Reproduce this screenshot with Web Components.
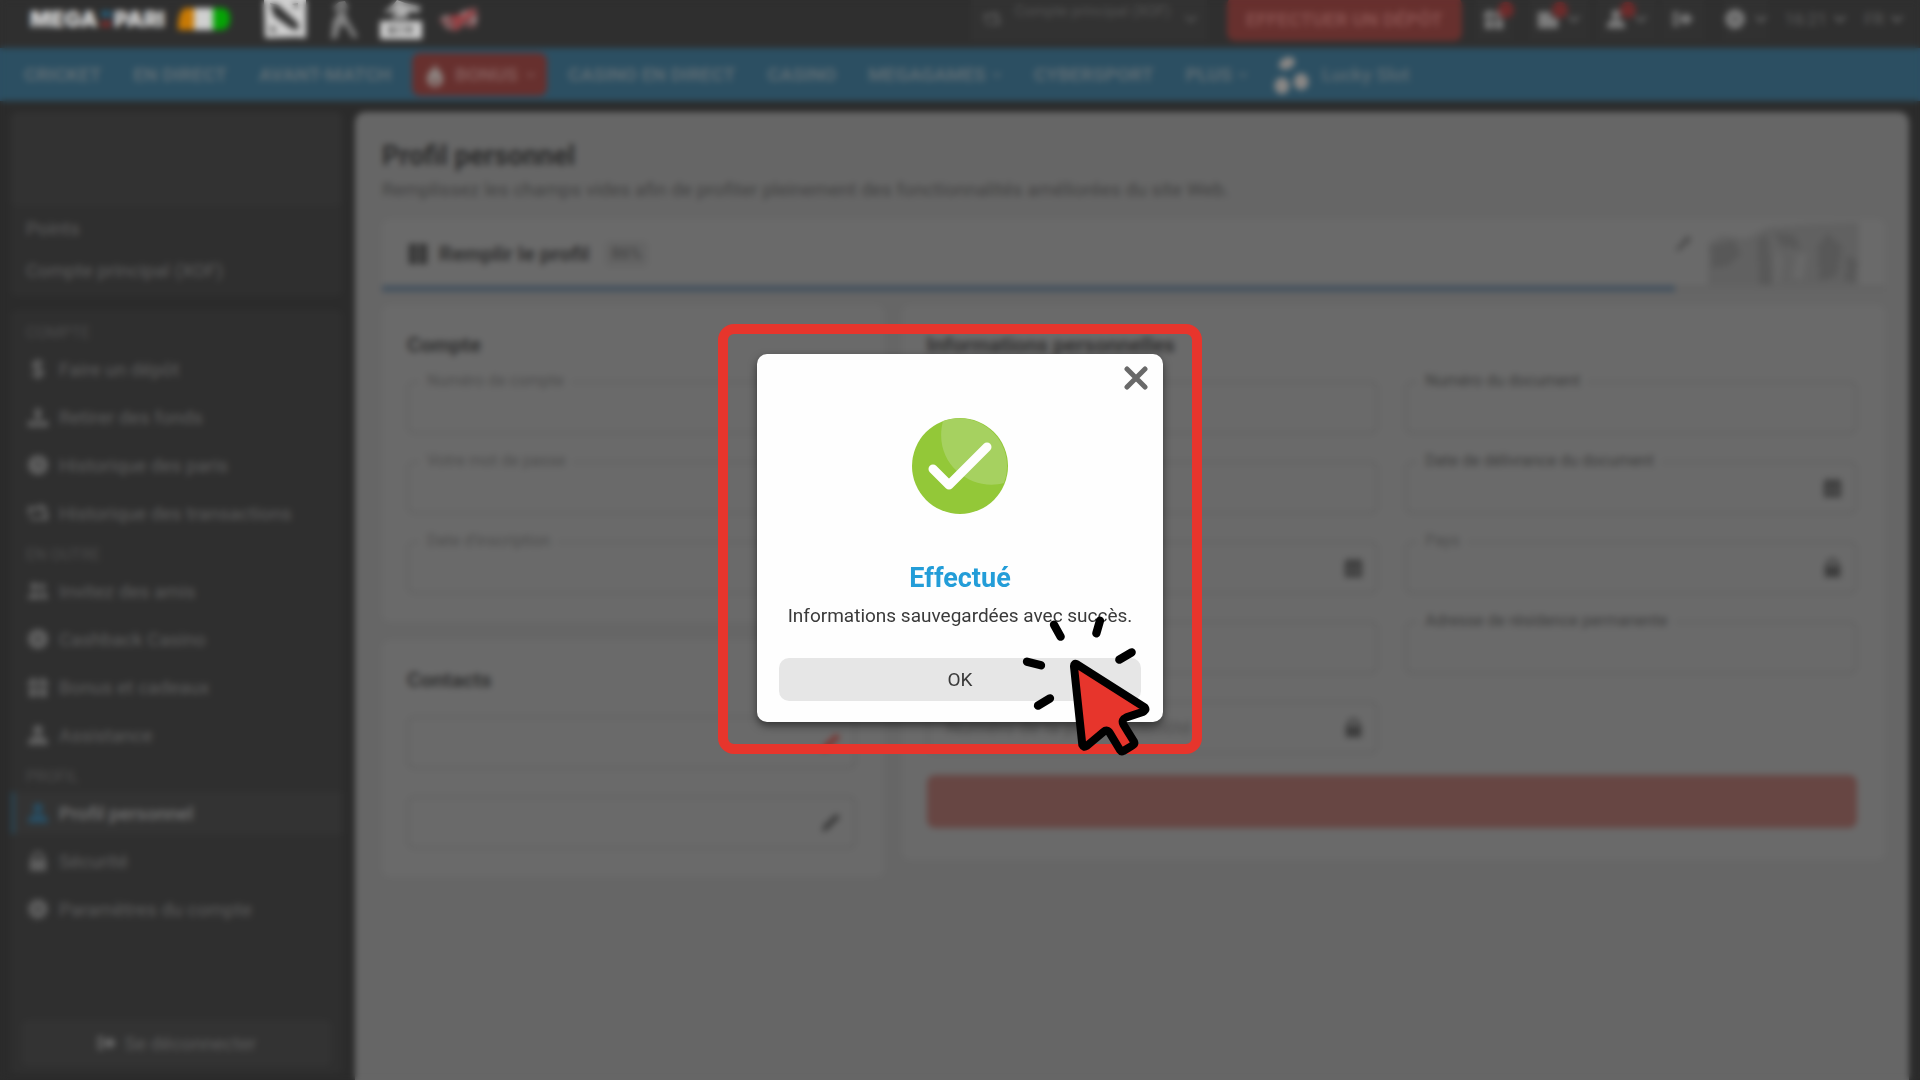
<!DOCTYPE html>
<html lang="fr">
<head>
<meta charset="utf-8">
<meta name="viewport" content="width=device-width, initial-scale=1">
<title>Profil personnel</title>
<style>
    body {
        margin: 0;
        background: #2b2b2b;
        font-family: Roboto, "Liberation Sans", sans-serif;
        font-size: 19px;
        color: #5e5e5e;
    }
</style>
</head>
<body>
<profile-page></profile-page>
<success-modal heading="Effectué">Informations sauvegardées avec succès.</success-modal>

<script>
// 24x24 icon shapes
const ICONS = {
    chevron: '<path d="M3 7l9 9 9-9" fill="none" stroke="currentColor" stroke-width="4"/>',
    dollar: '<path d="M17 7c-1-3-10-4-10 1s10 3 10 8-9 4-11 0M12 1v22" fill="none" stroke="currentColor" stroke-width="3.5"/>',
    withdraw: '<path d="M12 1l6 7h-3v8H9V8H6zM1 16h6l2 2h6l2-2h6v7H1z"/>',
    clock: '<path fill-rule="evenodd" d="M12 1a11 11 0 1 0 0 22 11 11 0 0 0 0-22zm-1 6h2v5l3 2-1 1-4-2z"/>',
    exchange: '<path d="M1 5h13V1l9 6-6 5V9H5v5H1zM23 20H4l-2-3h15l2-6h4z"/>',
    friends: '<circle cx="8" cy="7" r="4.5"/><circle cx="17" cy="7" r="3.5"/><path d="M1 21c0-10 14-10 14 0zM16 21c0-3 0-5-2-7 4-3 9 0 9 7z"/>',
    coin: '<path fill-rule="evenodd" d="M12 1a11 11 0 1 0 0 22 11 11 0 0 0 0-22zm0 8l3 3-3 3-3-3z"/>',
    gift: '<path d="M1 5h10v6H1zM13 5h10v6H13zM2 13h9v10H2zM13 13h9v10h-9zM6 1l6 4 6-4 2 4H4z"/>',
    report: '<path fill-rule="evenodd" d="M2 1h9v22H2zM13 1h9v22h-9zM5 7v2h4V7zm10 0v2h4V7zM5 15v2h4v-2zm10 0v2h4v-2z"/>',
    user: '<circle cx="12" cy="6.5" r="5.5"/><path d="M1 23c0-7 4-10 8-10h6c4 0 8 3 8 10z"/>',
    lock: '<path fill-rule="evenodd" d="M3 10h2V8a7 7 0 0 1 14 0v2h2v13H3zm5 0h8V8a4 4 0 0 0-8 0z"/>',
    gear: '<circle cx="12" cy="12" r="6" fill="none" stroke="currentColor" stroke-width="7"/><circle cx="12" cy="12" r="10" fill="none" stroke="currentColor" stroke-width="3" stroke-dasharray="4 3.85"/>',
    exit: '<path d="M1 4h7v3H4v10h4v3H1zM14 4l9 8-9 8v-5H7V9h7z"/>',
    mail: '<path d="M1 4h14v5l8 3v10H1z"/>',
    flame: '<path fill-rule="evenodd" d="M12 0c1 6 8 8 8 16a8 8 0 0 1-16 0c0-6 4-8 5-12l2 4zM12 15l-2 4a2 2 0 0 0 4 0z"/>',
    calendar: '<path fill-rule="evenodd" d="M2 4h4V1h3v3h6V1h3v3h4v19H2zm4 7v2h3v-2zm5 0v2h3v-2zm5 0v2h3v-2zM6 16v2h3v-2zm5 0v2h3v-2zm5 0v2h3v-2z"/>',
    pencil: '<path d="M1 23l2-8L17 2l5 4L8 20z"/>',
    close: '<path d="M3 3l18 18M21 3L3 21" fill="none" stroke="currentColor" stroke-width="5" stroke-linecap="round"/>',
    cherries: '<ellipse cx="9" cy="5" rx="5" ry="3.5" transform="rotate(-25 9 5)"/><ellipse cx="6" cy="18.5" rx="4.5" ry="5"/><ellipse cx="17.5" cy="16" rx="4.5" ry="5"/>'
};

class AppIcon extends HTMLElement {
    constructor() {
        super();
        this.attachShadow({ mode: "open" });
    }

    connectedCallback() {
        const size = this.getAttribute("size") || 22;
        this.shadowRoot.innerHTML = `
            <style>
                :host { display: inline-flex; flex: none; }
                svg { display: block; fill: currentColor; }
            </style>
            <svg width="${size}" height="${size}" viewBox="0 0 24 24" aria-hidden="true">${ICONS[this.getAttribute("name")]}</svg>
        `;
    }
}

class TopBar extends HTMLElement {
    constructor() {
        super();
        this.attachShadow({ mode: "open" });
        this.shadowRoot.innerHTML = `
            <style>
                :host {
                    display: flex;
                    align-items: center;
                    box-sizing: border-box;
                    height: 48px;
                    padding: 0 16px 10px 30px;
                    background: #2f2f2f;
                    color: #626262;
                }
                a { color: inherit; text-decoration: none; }
                .logo {
                    display: flex;
                    align-items: center;
                    gap: 3px;
                    font: 900 22px/24px Inter, sans-serif;
                    color: #d6d6d6;
                }
                .flag { margin: 0 32px 0 12px; }
                .games { display: flex; align-items: center; gap: 16px; }
                svg { display: block; }
                .right { display: flex; align-items: center; margin-left: auto; }
                button {
                    display: flex;
                    align-items: center;
                    border: 0;
                    padding: 0;
                    background: none;
                    color: inherit;
                    font: inherit;
                }
                .account {
                    gap: 14px;
                    width: 236px;
                    height: 44px;
                    padding: 0 12px;
                    margin-right: 20px;
                    background: #323232;
                    font-size: 15px;
                    color: #545454;
                }
                .account span { flex: 1; height: 34px; line-height: 18px; white-space: nowrap; }
                .deposit {
                    justify-content: center;
                    width: 235px;
                    height: 44px;
                    margin-right: 14px;
                    border-radius: 8px;
                    background: #67302e;
                    color: #8a5250;
                    font-weight: 700;
                }
                .tool {
                    position: relative;
                    justify-content: center;
                    gap: 8px;
                    height: 42px;
                    background: #313131;
                    color: #7c7c7c;
                }
                .badge {
                    position: absolute;
                    top: 4px;
                    left: 22px;
                    width: 16px;
                    height: 16px;
                    border-radius: 50%;
                    background: #6d2b2b;
                }
                .tool app-icon[name="chevron"] { color: #626262; }
                .gift { width: 36px; margin-right: 18px; }
                .mail { width: 58px; margin-right: 10px; }
                .user { width: 58px; margin-right: 6px; }
                .exit { width: 42px; margin-right: 20px; }
                .plain { gap: 6px; background: none; font-size: 17px; color: #5c5c5c; margin-left: 17px; }
            </style>
            <a class="logo" href="#" aria-label="Megapari">
                <span>MEGA</span>
                <svg width="10" height="20" viewBox="0 0 9 20"><path d="M0 2h9v6H0z" fill="#27607d"/><path d="M0 12h9v6H0z" fill="#812f2e"/></svg>
                <span>PARI</span>
            </a>
            <svg class="flag" width="54" height="24" viewBox="0 0 54 24">
                <path d="M8 1h9v22H1C1 13 2 4 8 1z" fill="#c87a05"/>
                <path d="M17 1h19v22H17z" fill="#d0d0d0"/>
                <path d="M36 1h9c6 0 8 5 8 11s-3 11-9 11h-8z" fill="#06a406"/>
            </svg>
            <div class="games">
                <svg width="44" height="40" viewBox="0 0 44 40">
                    <path d="M1 0h42v39l-9-1-32 1z" fill="#cfcfcf"/>
                    <path d="M7 4l8 2 20 18 1 7-7-1-18-13zM29 5l6-1v6zM8 26l6 6-6 1z" fill="#303030"/>
                </svg>
                <svg width="40" height="40" viewBox="0 0 40 40">
                    <path d="M16 3l6-1 3 6-3 5 3 8 10 17-5 1-8-13-5 1-3 12-6 1 2-18 5-8-5-6z" fill="#828282"/>
                    <path d="M15 8l6 2-3 4z" fill="#353535"/>
                </svg>
                <svg width="44" height="40" viewBox="0 0 44 40">
                    <path d="M4 14l10-8 4-5 8 3 16 4-3 6-8-2-4 7H12l6-7z" fill="#b0b0b0"/>
                    <path d="M1 22h42v18H1z" fill="#cfcfcf"/>
                    <path d="M9 27h8v8H9zM20 26h3v9h-3zM26 27h8v7h-8z" fill="#777"/>
                </svg>
                <svg width="40" height="30" viewBox="0 0 40 30">
                    <path d="M0 15l7-4 9 1 8-5 13-4 2 9-2 11-7 1-5-3-7 6-8-1-6-5z" fill="#7b5052"/>
                    <path d="M2 13l9-1-5 4zM21 9l10-3-7 6zM5 21l7 1-4 2zM32 13l6 1-3 7z" fill="#a5a0a0"/>
                    <path d="M12 14c9-3 11 7 3 10M22 15l12-7" fill="none" stroke="#a5393d" stroke-width="4"/>
                </svg>
            </div>
            <div class="right">
                <button class="account"><app-icon name="exchange" size="18"></app-icon><span>Compte principal (XOF)</span><app-icon name="chevron" size="14"></app-icon></button>
                <button class="deposit">EFFECTUER UN DÉPÔT</button>
                <button class="tool gift" aria-label="Bonus"><app-icon name="gift"></app-icon><i class="badge"></i></button>
                <button class="tool mail" aria-label="Messages"><app-icon name="mail"></app-icon><app-icon name="chevron" size="14"></app-icon><i class="badge"></i></button>
                <button class="tool user" aria-label="Profil"><app-icon name="user" size="20"></app-icon><app-icon name="chevron" size="14"></app-icon><i class="badge"></i></button>
                <button class="tool exit" aria-label="Se déconnecter"><app-icon name="exit"></app-icon></button>
                <button class="tool" aria-label="Paramètres"><app-icon name="gear"></app-icon><app-icon name="chevron" size="14"></app-icon></button>
                <button class="tool plain">16:21<app-icon name="chevron" size="14"></app-icon></button>
                <button class="tool plain">FR<app-icon name="chevron" size="14"></app-icon></button>
            </div>
        `;
    }
}

class MainNav extends HTMLElement {
    constructor() {
        super();
        this.attachShadow({ mode: "open" });
        this.shadowRoot.innerHTML = `
            <style>
                :host { display: block; background: #2c4f62; }
                nav {
                    display: flex;
                    align-items: center;
                    height: 53px;
                    padding: 0 8px;
                    font-weight: 700;
                    color: #5d6c74;
                }
                a {
                    display: flex;
                    align-items: center;
                    gap: 6px;
                    padding: 0 16px;
                    color: inherit;
                    text-decoration: none;
                    white-space: nowrap;
                }
                .bonus {
                    box-sizing: border-box;
                    height: 43px;
                    gap: 8px;
                    margin: 0 5px;
                    padding: 0 11px;
                    border-radius: 8px;
                    background: #67302e;
                    color: #845c5a;
                }
                .bonus app-icon:first-child { color: #8d8380; }
                .slot { gap: 10px; padding-left: 8px; font-weight: 500; }
                .slot app-icon { color: #8a8785; }
            </style>
            <nav>
                <a href="#">CRICKET</a>
                <a href="#">EN DIRECT</a>
                <a href="#">AVANT-MATCH</a>
                <a class="bonus" href="#"><app-icon name="flame" size="24"></app-icon>BONUS<app-icon name="chevron" size="10"></app-icon></a>
                <a href="#">CASINO EN DIRECT</a>
                <a href="#">CASINO</a>
                <a href="#">MEGAGAMES<app-icon name="chevron" size="10"></app-icon></a>
                <a href="#">CYBERSPORT</a>
                <a href="#">PLUS<app-icon name="chevron" size="10"></app-icon></a>
                <a class="slot" href="#"><app-icon name="cherries" size="40"></app-icon>Lucky Slot</a>
            </nav>
        `;
    }
}

class SideLink extends HTMLElement {
    constructor() {
        super();
        this.attachShadow({ mode: "open" });
    }

    connectedCallback() {
        this.shadowRoot.innerHTML = `
            <style>
                :host { display: block; padding: 3px 0; color: #5e5e5e; }
                a {
                    display: flex;
                    align-items: center;
                    gap: 10px;
                    height: 42px;
                    padding-left: 12px;
                    border-left: 4px solid transparent;
                    color: inherit;
                    text-decoration: none;
                }
                :host([active]) { color: #727272; }
                :host([active]) a { border-color: #2a4554; background: #333; font-weight: 500; }
                :host([active]) app-icon { color: #284d62; }
            </style>
            <a href="#"><app-icon name="${this.getAttribute("icon")}"></app-icon><slot></slot></a>
        `;
    }
}

class SideMenu extends HTMLElement {
    constructor() {
        super();
        this.attachShadow({ mode: "open" });
        this.shadowRoot.innerHTML = `
            <style>
                :host { display: flex; flex-direction: column; gap: 14px; }
                section { background: #2f2f2f; border-radius: 6px; }
                .user { height: 94px; background: #323232; border-radius: 6px; }
                .balance { padding: 2px 15px 4px; color: #5e5e5e; }
                .balance p { margin: 0; line-height: 42px; }
                .menu { display: flex; flex: 1; flex-direction: column; padding: 5px 0 8px; }
                h2 {
                    margin: 0;
                    padding: 6px 0 0 15px;
                    font-size: 16px;
                    font-weight: 400;
                    line-height: 24px;
                    color: #4c4c4c;
                }
                button {
                    display: flex;
                    align-items: center;
                    justify-content: center;
                    gap: 8px;
                    height: 46px;
                    margin: auto 11px 0;
                    border: 0;
                    border-radius: 6px;
                    background: #333;
                    color: #5e5e5e;
                    font: inherit;
                }
                button app-icon { color: #6a6a6a; }
            </style>
            <section>
                <div class="user"></div>
                <div class="balance">
                    <p>Points</p>
                    <p>Compte principal (XOF)</p>
                </div>
            </section>
            <section class="menu">
                <h2>COMPTE</h2>
                <side-link icon="dollar">Faire un dépôt</side-link>
                <side-link icon="withdraw">Retirer des fonds</side-link>
                <side-link icon="clock">Historique des paris</side-link>
                <side-link icon="exchange">Historique des transactions</side-link>
                <h2>EN OUTRE</h2>
                <side-link icon="friends">Invitez des amis</side-link>
                <side-link icon="coin">Cashback Casino</side-link>
                <side-link icon="gift">Bonus et cadeaux</side-link>
                <side-link icon="user">Assistance</side-link>
                <h2>PROFIL</h2>
                <side-link icon="user" active>Profil personnel</side-link>
                <side-link icon="lock">Sécurité</side-link>
                <side-link icon="gear">Paramètres du compte</side-link>
                <button><app-icon name="exit" size="20"></app-icon>Se déconnecter</button>
            </section>
        `;
    }
}

class FormField extends HTMLElement {
    constructor() {
        super();
        this.attachShadow({ mode: "open" });
    }

    connectedCallback() {
        const label = this.getAttribute("label");
        const icon = this.getAttribute("icon");
        this.shadowRoot.innerHTML = `
            <style>
                :host { display: block; position: relative; color: #3c3c3c; }
                input {
                    box-sizing: border-box;
                    display: block;
                    width: 100%;
                    height: 53px;
                    padding: 0 50px 0 18px;
                    border: 2px solid #606060;
                    border-radius: 8px;
                    background: none;
                    color: inherit;
                    font: inherit;
                }
                input::placeholder { color: #505050; opacity: 1; }
                label {
                    position: absolute;
                    top: -9px;
                    left: 12px;
                    padding: 0 8px;
                    background: #6a6a6a;
                    font-size: 16px;
                    line-height: 18px;
                    color: #4c4c4c;
                }
                :host([strong]) label { color: #3c3c3c; }
                app-icon { position: absolute; top: 16px; right: 14px; }
                :host([warn]) app-icon { color: #7b3430; }
            </style>
            <input id="field" type="text" placeholder="${this.getAttribute("placeholder") || ""}" aria-label="${this.getAttribute("name") || label}">
            ${label ? `<label for="field">${label}</label>` : ""}
            ${icon ? `<app-icon name="${icon}" size="21"></app-icon>` : ""}
        `;
    }
}

class FormCard extends HTMLElement {
    constructor() {
        super();
        this.attachShadow({ mode: "open" });
    }

    connectedCallback() {
        this.shadowRoot.innerHTML = `
            <style>
                :host { display: block; padding: 25px 28px 28px 25px; border-radius: 8px; background: #6a6a6a; }
                h2 { margin: 0 0 20px; font-size: 21px; line-height: 31px; color: #303030; }
                .fields { display: grid; grid-template-columns: minmax(0, 1fr); gap: 27px; }
                :host([wide]) .fields { grid-template-columns: repeat(2, minmax(0, 1fr)); }
            </style>
            <h2>${this.getAttribute("heading")}</h2>
            <div class="fields"><slot></slot></div>
            <slot name="action"></slot>
        `;
    }
}

class ProfileForm extends HTMLElement {
    constructor() {
        super();
        this.attachShadow({ mode: "open" });
        this.shadowRoot.innerHTML = `
            <style>
                :host { display: block; padding: 28px 24px 28px 27px; border-radius: 10px 10px 0 0; background: #666; }
                h1 { margin: 0 0 6px; font-size: 27px; line-height: 32px; color: #2b2b2b; }
                p { margin: 0 0 17px; line-height: 24px; color: #404040; }
                .progress { display: flex; flex-direction: column; border-radius: 8px 8px 0 0; background: #6a6a6a; overflow: hidden; }
                .status {
                    display: flex;
                    align-items: center;
                    gap: 10px;
                    box-sizing: border-box;
                    height: 66px;
                    padding: 3px 16px 0 25px;
                    color: #303030;
                    font-size: 21px;
                    font-weight: 700;
                }
                .percent { padding: 0 6px; margin-left: 6px; border-radius: 6px; background: #646464; font-size: 16px; line-height: 26px; color: #484848; }
                .art { margin-left: auto; align-self: end; }
                .track { height: 7px; background: #646464; }
                .bar { width: 86%; height: 100%; background: #47535f; }
                .cards { display: grid; grid-template-columns: 51fr 100fr; gap: 18px; align-items: start; margin-top: 13px; }
                .column { display: grid; gap: 18px; }
                .save {
                    width: 100%;
                    height: 53px;
                    margin-top: 21px;
                    border: 0;
                    border-radius: 8px;
                    background: #674643;
                }
            </style>
            <h1>Profil personnel</h1>
            <p>Remplissez les champs vides afin de profiter pleinement des fonctionnalités améliorées du site Web.</p>
            <div class="progress">
                <div class="status">
                    <app-icon name="report"></app-icon>
                    <span>Remplir le profil</span>
                    <span class="percent">86%</span>
                    <svg class="art" width="196" height="64" viewBox="0 0 190 64" preserveAspectRatio="none" aria-hidden="true">
                        <path d="M2 29l12-15 4 5L6 30z" fill="#4e4e4e"/>
                        <path d="M34 64V22l14-8 22 4 22-12 34-3 54-2v63z" fill="#616161"/>
                        <path d="M37 25l22-6 7 14-13 12-15 2zM82 18l10-4 4 50H84zM98 12l20 2 6 14-19-3zM140 26l10-14 14 14-5 29-17 5zM168 34l11 6-3 22-9-2z" fill="#585858"/>
                        <path d="M100 26l6 12-3 24h-4zM120 34l10-3-4 28-10-2z" fill="#686868"/>
                    </svg>
                </div>
                <div class="track"><div class="bar"></div></div>
            </div>
            <div class="cards">
                <div class="column">
                    <form-card heading="Compte">
                        <form-field label="Numéro de compte"></form-field>
                        <form-field label="Votre mot de passe"></form-field>
                        <form-field label="Date d'inscription"></form-field>
                    </form-card>
                    <form-card heading="Contacts">
                        <form-field name="Téléphone" icon="pencil" warn></form-field>
                        <form-field name="E-mail" icon="pencil"></form-field>
                    </form-card>
                </div>
                <form-card heading="Informations personnelles" wide>
                    <form-field name="Nom"></form-field>
                    <form-field label="Numéro du document" strong></form-field>
                    <form-field name="Prénom"></form-field>
                    <form-field label="Date de délivrance du document" icon="calendar" strong></form-field>
                    <form-field name="Date de naissance" icon="calendar"></form-field>
                    <form-field label="Pays" icon="lock"></form-field>
                    <form-field name="Lieu de naissance"></form-field>
                    <form-field label="Adresse de résidence permanente" strong></form-field>
                    <form-field name="Pièce d'identité" placeholder="Numéro de la pièce d'identité" icon="lock"></form-field>
                </form-card>
            </div>
        `;
        // save button goes under the grid of the wide card
        const save = document.createElement("button");
        save.className = "save";
        save.slot = "action";
        save.setAttribute("aria-label", "Enregistrer");
        this.shadowRoot.querySelector("form-card[wide]").append(save);
    }
}

class ProfilePage extends HTMLElement {
    constructor() {
        super();
        this.attachShadow({ mode: "open" });
        this.shadowRoot.innerHTML = `
            <style>
                :host { display: flex; flex-direction: column; min-height: 100vh; }
                main { display: grid; grid-template-columns: 331px minmax(0, 1fr); gap: 13px; flex: 1; padding: 11px 11px 0; }
                side-menu { padding-bottom: 6px; }
            </style>
            <top-bar></top-bar>
            <main-nav></main-nav>
            <main>
                <side-menu></side-menu>
                <profile-form></profile-form>
            </main>
        `;
    }
}

class SuccessModal extends HTMLElement {
    constructor() {
        super();
        this.attachShadow({ mode: "open" });
    }

    connectedCallback() {
        this.shadowRoot.innerHTML = `
            <style>
                :host {
                    position: fixed;
                    inset: 0;
                    display: flex;
                    align-items: center;
                    justify-content: center;
                    padding-bottom: 2px;
                    backdrop-filter: blur(3px);
                }
                .frame { padding: 20px 29px 22px; border: 10px solid #e7352c; border-radius: 16px; }
                .box {
                    position: relative;
                    box-sizing: border-box;
                    display: flex;
                    flex-direction: column;
                    align-items: center;
                    width: 406px;
                    padding: 64px 22px 21px;
                    border-radius: 10px;
                    background: #fefefe;
                    box-shadow: 0 4px 9px rgba(0, 0, 0, 0.5);
                    color: #3a3a3a;
                    text-align: center;
                }
                .close {
                    position: absolute;
                    top: 12px;
                    right: 15px;
                    padding: 0;
                    border: 0;
                    background: none;
                    color: #696969;
                }
                svg { display: block; }
                h2 { margin: 47px 0 9px; font-size: 27px; line-height: 34px; color: #239dd8; }
                p { margin: 0; line-height: 24px; white-space: nowrap; }
                .ok {
                    width: 100%;
                    height: 43px;
                    margin-top: 30px;
                    border: 0;
                    border-radius: 10px;
                    background: #e6e6e6;
                    color: inherit;
                    font: inherit;
                }
                .cursor { position: absolute; right: 10px; bottom: -38px; pointer-events: none; }
            </style>
            <div class="frame">
                <div class="box" role="dialog" aria-labelledby="heading">
                    <button class="close" aria-label="Fermer"><app-icon name="close" size="24"></app-icon></button>
                    <svg width="96" height="96" viewBox="0 0 96 96" aria-hidden="true">
                        <circle cx="48" cy="48" r="48" fill="#93c838"/>
                        <path d="M31 3a48 48 0 0 1 61 62C60 74 20 46 31 3z" fill="#a6d160"/>
                        <path d="M21 51l16 16 38-38" fill="none" stroke="#fefefe" stroke-width="9" stroke-linecap="round" stroke-linejoin="round"/>
                    </svg>
                    <h2 id="heading">${this.getAttribute("heading")}</h2>
                    <p><slot></slot></p>
                    <button class="ok">OK</button>
                    <svg class="cursor" width="133" height="147" viewBox="960 220 399 441" aria-hidden="true">
                        <path d="M1062 255l20 36M1200 243l-11 38M1295 338l-37 22M981 366l42 11M1050 476l-36 22" stroke="#000" stroke-width="25" stroke-linecap="round"/>
                        <path d="M1131 374l203 129q5 7-3 13l-52 17q-16 7-9 21l32 52q3 7-4 11l-28 17q-6 3-10-3l-30-50q-8-14-20-4l-50 42q-9 6-13-3l-25-235q-1-12 9-7z" fill="#e7352c" stroke="#000" stroke-width="24" stroke-linejoin="round"/>
                    </svg>
                </div>
            </div>
        `;
    }
}

// Define the custom elements
customElements.define("app-icon", AppIcon);
customElements.define("top-bar", TopBar);
customElements.define("main-nav", MainNav);
customElements.define("side-link", SideLink);
customElements.define("side-menu", SideMenu);
customElements.define("form-field", FormField);
customElements.define("form-card", FormCard);
customElements.define("profile-form", ProfileForm);
customElements.define("profile-page", ProfilePage);
customElements.define("success-modal", SuccessModal);
</script>
</body>
</html>
